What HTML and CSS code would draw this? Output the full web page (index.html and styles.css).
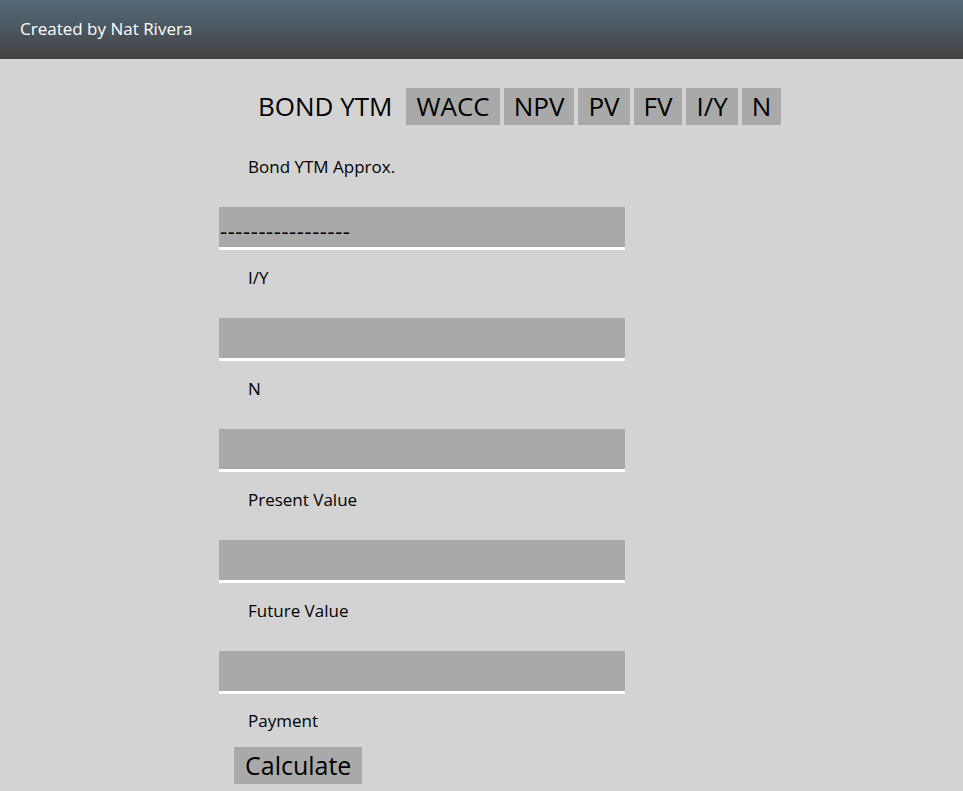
FILE: index.html
```html
<!DOCTYPE html>
<html>
<head>
<meta charset="utf-8">
<link rel="stylesheet" href="styles.css">
</head>
<body>
<header class="topbar">Created by Nat Rivera</header>
<main class="main">
  <nav class="tabs">
    <span class="tab tab-active">BOND YTM</span>
    <span class="tab">WACC</span>
    <span class="tab">NPV</span>
    <span class="tab">PV</span>
    <span class="tab">FV</span>
    <span class="tab">I/Y</span>
    <span class="tab">N</span>
  </nav>
  <form class="form">
    <div class="label first">Bond YTM Approx.</div>
    <div class="field">-----------------</div>
    <div class="label">I/Y</div>
    <div class="field"></div>
    <div class="label">N</div>
    <div class="field"></div>
    <div class="label">Present Value</div>
    <div class="field"></div>
    <div class="label">Future Value</div>
    <div class="field"></div>
    <div class="label last">Payment</div>
    <div class="btn">Calculate</div>
  </form>
</main>
</body>
</html>
```
FILE: styles.css
```css
html, body {
  margin: 0;
  padding: 0;
  background: #d3d3d3;
  font-family: "Open Sans", "Noto Sans", sans-serif;
  color: #000;
}
.topbar {
  height: 59px;
  box-sizing: border-box;
  padding-left: 20px;
  line-height: 57px;
  font-size: 17px;
  color: #fff;
  background: linear-gradient(to bottom, #546a7b 0%, #424242 100%);
}
.main {
  padding-left: 219px;
}
.tabs {
  display: flex;
  gap: 4px;
  margin-top: 29px;
  margin-left: 29px;
}
.tab {
  display: block;
  height: 37px;
  line-height: 37px;
  padding: 0 10px;
  font-size: 26px;
  background: #a9a9a9;
}
.tab-active {
  background: transparent;
}
.form {
  width: 406px;
}
.label {
  margin-left: 29px;
  height: 20px;
  line-height: 20px;
  font-size: 17px;
  margin-top: 18px;
  margin-bottom: 30px;
}
.label.first {
  margin-top: 32px;
}
.label.last {
  margin-top: 17px;
  margin-bottom: 0;
}
.field {
  height: 40px;
  border-bottom: 3px solid #fff;
  background: #a9a9a9;
  font-size: 22px;
  letter-spacing: 0.6px;
  line-height: 46px;
  padding-left: 1px;
}
.btn {
  display: block;
  width: fit-content;
  margin-left: 15px;
  margin-top: 16px;
  height: 37px;
  line-height: 37px;
  padding: 0 11px;
  font-size: 25px;
  background: #a9a9a9;
}
```
